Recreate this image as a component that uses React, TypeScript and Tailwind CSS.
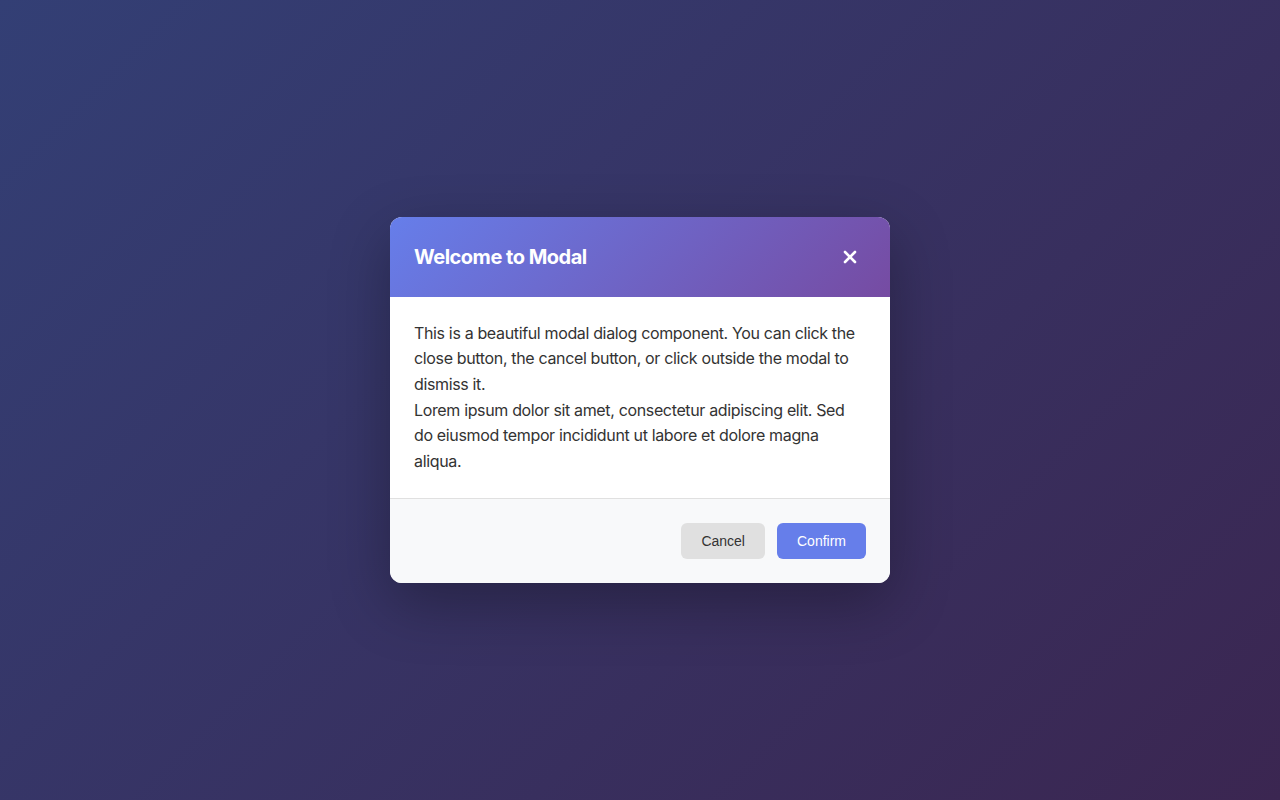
export default function App() {
  return (
    <div
      className="min-h-screen w-full flex items-center justify-center bg-[linear-gradient(135deg,#333f75_0%,#3b2651_100%)]"
      style={{ fontFamily: 'Inter, "Noto Sans", sans-serif' }}
    >
      <div className="w-[500px] rounded-xl overflow-hidden bg-white shadow-[0_20px_60px_rgba(0,0,0,0.3)]">
        <div className="flex items-center justify-between px-6 py-6 bg-[linear-gradient(135deg,#667eea_0%,#764ba2_100%)]">
          <h2 className="text-[20px] leading-8 font-bold text-white tracking-[-0.5px]">Welcome to Modal</h2>
          <button className="w-8 h-8 flex items-center justify-center text-white" aria-label="Close">
            <svg width="14" height="14" viewBox="0 0 14 14" fill="none">
              <path d="M2 2L12 12M12 2L2 12" stroke="white" strokeWidth="2.6" strokeLinecap="round" />
            </svg>
          </button>
        </div>
        <div className="p-6 text-[16px] leading-[1.6] text-[#333] tracking-[-0.35px]">
          <p>
            This is a beautiful modal dialog component. You can click the close button, the cancel button, or click
            outside the modal to dismiss it.
          </p>
          <p>
            Lorem ipsum dolor sit amet, consectetur adipiscing elit. Sed do eiusmod tempor incididunt ut labore et
            dolore magna aliqua.
          </p>
        </div>
        <div
          className="flex justify-end gap-3 px-6 py-6 bg-[#f8f9fa] border-t border-[#e0e0e0]"
          style={{ fontFamily: '"Liberation Sans", Arial, sans-serif' }}
        >
          <button className="h-9 px-5 rounded-md bg-[#e0e0e0] text-[14px] text-[#333]">Cancel</button>
          <button className="h-9 px-5 rounded-md bg-[#667eea] text-[14px] text-white">Confirm</button>
        </div>
      </div>
    </div>
  )
}
